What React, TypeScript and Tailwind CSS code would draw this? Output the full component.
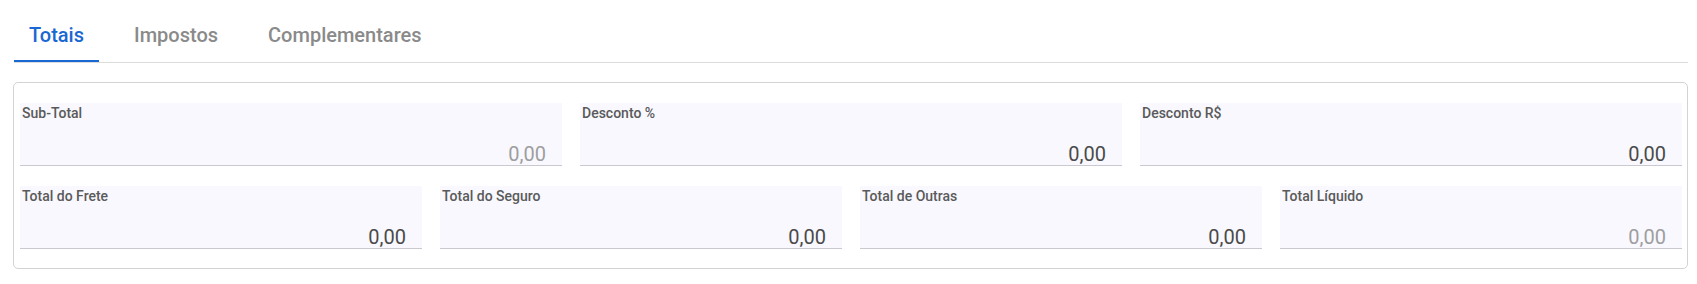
import React from "react";

type FieldProps = { label: string; value: string; disabled?: boolean };

function Field({ label, value, disabled }: FieldProps) {
  return (
    <div className="flex h-[63px] min-w-0 flex-1 flex-col justify-between border-b border-[#c9c9cf] bg-[#f8f8fe]">
      <div className="pl-[2px] text-[14px] font-medium leading-[20px] text-[#5a5a5a]">{label}</div>
      <div
        className={
          "pr-[16px] text-right text-[20px] leading-[22px] " +
          (disabled ? "text-[#9e9e9e]" : "text-[#4a4a4a]")
        }
      >
        {value}
      </div>
    </div>
  );
}

export default function App() {
  const tabs = ["Totais", "Impostos", "Complementares"];
  return (
    <div className="min-h-[284px] bg-white pl-[13px] pr-[9px]" style={{ fontFamily: "Roboto, 'Noto Sans', sans-serif" }}>
      <div className="ml-px flex gap-[20px] border-b border-[#dcdcdc]">
        {tabs.map((t, i) => (
          <div
            key={t}
            className={
              "border-b-2 px-[15px] pt-[21px] pb-[11px] text-[20px] font-medium leading-[28px] " +
              (i === 0 ? "border-[#1967d2] text-[#1967d2]" : "border-transparent text-[#8a8a8a]")
            }
          >
            {t}
          </div>
        ))}
      </div>
      <div className="mt-[19px] flex flex-col gap-[20px] rounded-[5px] border border-[#d3d3d3] pt-[20px] pb-[19px] pl-[6px] pr-[5px]">
        <div className="flex gap-[18px]">
          <Field label="Sub-Total" value="0,00" disabled />
          <Field label="Desconto %" value="0,00" />
          <Field label="Desconto R$" value="0,00" />
        </div>
        <div className="flex gap-[18px]">
          <Field label="Total do Frete" value="0,00" />
          <Field label="Total do Seguro" value="0,00" />
          <Field label="Total de Outras" value="0,00" />
          <Field label="Total Líquido" value="0,00" disabled />
        </div>
      </div>
    </div>
  );
}
